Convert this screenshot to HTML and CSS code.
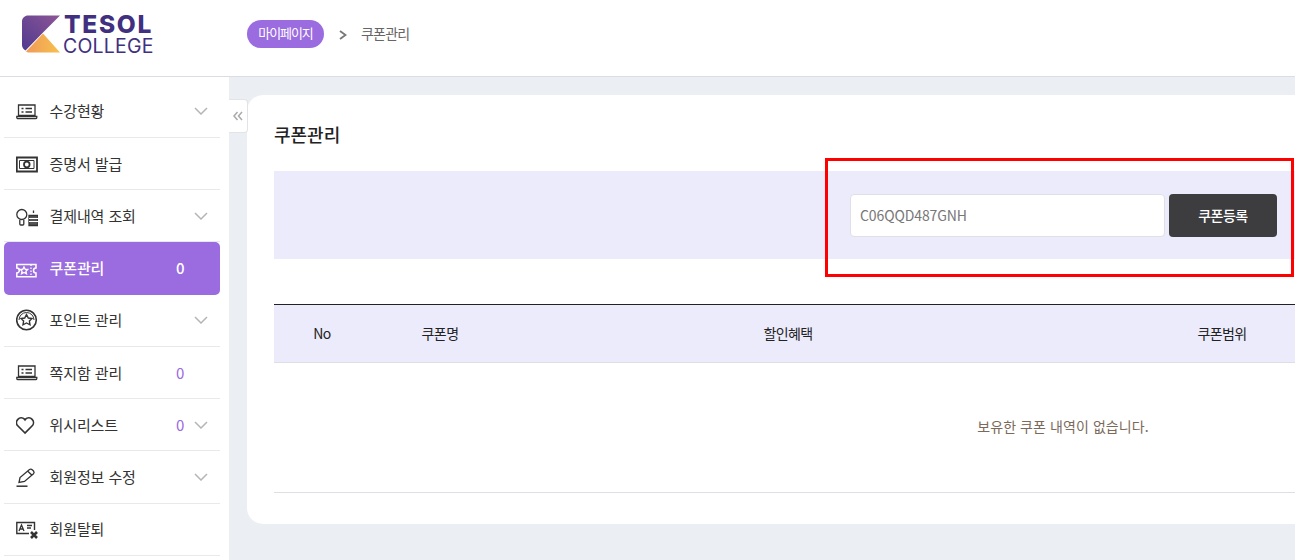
FILE: index.html
```html
<!DOCTYPE html>
<html lang="ko">
<head>
<meta charset="utf-8">
<title>쿠폰관리</title>
<link rel="stylesheet" href="styles.css">
</head>
<body>
<header class="topbar">
  <a class="logo">
    <svg class="logo-mark" viewBox="0 0 38 38" width="38" height="38">
      <defs>
        <linearGradient id="lp" x1="0" y1="1" x2="1" y2="0"><stop offset="0" stop-color="#4f3a8f"/><stop offset="1" stop-color="#8d5596"/></linearGradient>
        <linearGradient id="lo" x1="0" y1="0" x2="1" y2="0"><stop offset="0" stop-color="#f09a58"/><stop offset="1" stop-color="#f7c04e"/></linearGradient>
      </defs>
      <path d="M6 0.5H38L21 17.5L3.5 35.5C1.5 34.5 0 32.5 0 30V6.500C0 3 3 0.500 6 0.500Z" fill="url(#lp)"/>
      <path d="M21 18.500L38 37.500H7C5.800 37.500 4.800 37.200 4 36.500Z" fill="url(#lo)"/>
    </svg>
    <span class="logo-text"><span class="logo-top">TESOL</span><span class="logo-bottom">COLLEGE</span></span>
  </a>
  <nav class="crumbs">
    <span class="pill">마이페이지</span>
    <svg class="crumb-arrow" viewBox="0 0 8 10" width="8" height="10"><path d="M1 1L6.500 5L1 9" fill="none" stroke="#777" stroke-width="1.800"/></svg>
    <span class="crumb-now">쿠폰관리</span>
  </nav>
</header>
<div class="layout">
  <aside class="sidebar">
    <ul class="menu">
      <li class="item">
        <svg class="ico" viewBox="0 0 22 22"><path d="M2.500 5H19V15.500H2.500Z M0.800 16.500H20.800V17.500A1.200 1.200 0 0 1 19.600 18.700H2A1.200 1.200 0 0 1 0.800 17.500Z M5.500 8.500H7.500 M9.500 8.500H16 M5.500 12H7.500 M9.500 12H16"/></svg>
        <span class="label">수강현황</span><svg class="chev" viewBox="0 0 14 8"><path d="M1 1L7 7L13 1"/></svg>
      </li>
      <li class="item">
        <svg class="ico" viewBox="0 0 22 22"><path d="M0.800 4.500H21V18.500H0.800Z" stroke-width="1.800"/><path d="M3.500 7.500H18V15.500H3.500Z" stroke-width="1"/><circle cx="10.800" cy="11.500" r="2.800" stroke-width="1.800"/></svg>
        <span class="label">증명서 발급</span>
      </li>
      <li class="item">
        <svg class="ico" viewBox="0 0 22 22"><circle cx="5.800" cy="9.500" r="5"/><path d="M3.800 15V19A1 1 0 0 0 4.800 20H6.800A1 1 0 0 0 7.800 19V15"/><path class="solid" d="M13 10.500H22V20.500H13Z"/><path class="gap" d="M13 13.500H22 M13 16.500H22"/><path d="M17.500 5.500V8"/></svg>
        <span class="label">결제내역 조회</span><svg class="chev" viewBox="0 0 14 8"><path d="M1 1L7 7L13 1"/></svg>
      </li>
      <li class="item active">
        <svg class="ico" viewBox="0 0 22 22"><path d="M0.800 6.500H20V10A2.500 2.500 0 0 0 20 15V18.800H0.800V15A2.500 2.500 0 0 0 0.800 10Z" stroke-width="1.500"/><path d="M15 6.500V18.800" stroke-dasharray="1.500 1.500"/><path d="M8 9L9.200 11.400H11.700L9.900 13.200L10.500 15.800L8 14.500L5.500 15.800L6.100 13.200L4.300 11.400H6.800Z"/></svg>
        <span class="label">쿠폰관리</span><span class="count">0</span>
      </li>
      <li class="item">
        <svg class="ico" viewBox="0 0 22 22"><circle cx="10.500" cy="11" r="9.800" stroke-width="1.600"/><path d="M3 11A7.500 7.500 0 0 1 18 11" stroke-width="1"/><path d="M10.500 5.500L12.300 9L16 9.500L13.400 12.100L14 15.800L10.500 14L7 15.800L7.600 12.100L5 9.500L8.700 9Z" stroke-width="1.400"/></svg>
        <span class="label">포인트 관리</span><svg class="chev" viewBox="0 0 14 8"><path d="M1 1L7 7L13 1"/></svg>
      </li>
      <li class="item">
        <svg class="ico" viewBox="0 0 22 22"><path d="M2.500 4H19V14.500H2.500Z M0.800 15.500H20.800V16.500A1.200 1.200 0 0 1 19.600 17.700H2A1.200 1.200 0 0 1 0.800 16.500Z M5.500 7.500H7.500 M9.500 7.500H16 M5.500 11H7.500 M9.500 11H16"/></svg>
        <span class="label">쪽지함 관리</span><span class="count">0</span>
      </li>
      <li class="item">
        <svg class="ico" viewBox="0 0 22 22"><path d="M9 19L2 12A4.700 4.700 0 0 1 8.500 5.200L9 5.800L9.500 5.200A4.700 4.700 0 0 1 16 12Z" stroke-width="1.700"/></svg>
        <span class="label">위시리스트</span><span class="count">0</span><svg class="chev" viewBox="0 0 14 8"><path d="M1 1L7 7L13 1"/></svg>
      </li>
      <li class="item">
        <svg class="ico" viewBox="0 0 22 22"><path d="M3 16.500L4 11.500L13.500 3.500C14.500 2.800 15.500 3 16.500 4L17.500 5C18.300 6 18.300 7 17.500 7.800L8.500 15.500Z M11.800 5.200L16 9.200" stroke-width="1.300"/><path d="M0.500 20.200H11.500" stroke-width="1.500"/></svg>
        <span class="label">회원정보 수정</span><svg class="chev" viewBox="0 0 14 8"><path d="M1 1L7 7L13 1"/></svg>
      </li>
      <li class="item">
        <svg class="ico" viewBox="0 0 22 22"><path d="M13 15.500H0.800V4.500H18.500V12" stroke-width="1.400"/><path d="M3 13L5.500 7L8 13 M3.800 11H7.200 M11 7.500H16 M11 10H15"/><path d="M15 14L21 20 M21 14L15 20" stroke-width="2.600"/></svg>
        <span class="label">회원탈퇴</span>
      </li>
    </ul>
  </aside>
  <main class="content">
    <button class="collapse" type="button" aria-label="접기">
      <svg viewBox="0 0 10 10" width="10" height="10"><path d="M4.500 1L1 5L4.500 9 M9 1L5.500 5L9 9"/></svg>
    </button>
    <section class="card">
      <h1 class="title">쿠폰관리</h1>
      <form class="coupon-band">
        <input class="coupon-input" type="text" value="C06QQD487GNH">
        <button class="coupon-btn" type="button">쿠폰등록</button>
      </form>
      <table class="coupons">
        <colgroup><col class="c-no"><col class="c-name"><col class="c-benefit"><col class="c-scope"><col class="c-rest"></colgroup>
        <thead>
          <tr><th>No</th><th>쿠폰명</th><th>할인혜택</th><th>쿠폰범위</th><th></th></tr>
        </thead>
        <tbody>
          <tr><td colspan="5" class="empty">보유한 쿠폰 내역이 없습니다.</td></tr>
        </tbody>
      </table>
    </section>
  </main>
</div>
<div class="annotation"></div>
</body>
</html>
```
FILE: styles.css
```css
* { box-sizing: border-box; }
html, body { height: 100%; }
body {
  margin: 0;
  width: 1295px;
  height: 560px;
  overflow: hidden;
  position: relative;
  background: #ebeef3;
  color: #222;
  font-family: "Noto Sans CJK KR", "Noto Sans", sans-serif;
}
.topbar {
  height: 77px;
  background: #fff;
  border-bottom: 1px solid #dcdde0;
  display: flex;
  align-items: flex-start;
}
.logo {
  width: 247px;
  padding: 15px 0 0 22px;
  display: flex;
  gap: 3px;
}
.logo-mark { display: block; flex: none; }
.logo-text { display: flex; flex-direction: column; color: #41307f; font-family: Inter, sans-serif; }
.logo-top { font-size: 24.500px; font-weight: 800; line-height: 19px; letter-spacing: 1.700px; padding-left: 1px; height: 19px; }
.logo-bottom { font-size: 19.500px; font-weight: 400; line-height: 18px; letter-spacing: 0.2px; margin-top: 3px; }
.crumbs { display: flex; align-items: center; height: 28px; margin-top: 20px; }
.pill {
  height: 28px;
  width: 77px;
  border-radius: 14px;
  background: #9b6be0;
  color: #fff;
  font-size: 13px;
  letter-spacing: -1.100px;
  line-height: 26px;
  text-align: center;
}
.crumb-arrow { margin: 2px 0 0 15px; }
.crumb-now { margin: 0 0 2px 14px; font-size: 14px; letter-spacing: -0.8px; color: #666; }
.layout { display: flex; height: 483px; }
.sidebar { width: 229px; flex: none; background: #fff; padding: 8.700px 9px 0 4px; }
.menu { list-style: none; margin: 0; padding: 0; }
.item {
  height: 52.250px;
  display: flex;
  align-items: center;
  padding: 0 12px;
  border-bottom: 1px solid #e8e9eb;
  color: #333;
}
.ico {
  width: 22px;
  height: 22px;
  flex: none;
  fill: none;
  stroke: #333;
  stroke-width: 1.300;
}
.ico .solid { fill: #555; stroke: #333; }
.ico .gap { stroke: #fff; stroke-width: 1; }
.label { margin-left: 11.500px; padding-bottom: 1px; font-size: 15px; flex: 1; letter-spacing: -0.1px; }
.count { width: 18px; font-size: 15px; color: #9b6be0; flex: none; padding-bottom: 1px; }
.count:last-child { margin-right: 14px; }
.chev { width: 14px; height: 8px; fill: none; stroke: #b5b5b5; stroke-width: 1.500; flex: none; }
.active { background: #9b6be0; border-bottom: 0; border-radius: 5px; color: #fff; }
.active .ico { stroke: #fff; }
.active .label { font-weight: 500; padding-bottom: 3px; }
.active .count { color: #fff; font-weight: 500; padding-bottom: 3px; }
.content { position: relative; flex: 1; min-width: 0; padding: 18px 0 0 18px; }
.collapse {
  position: absolute;
  left: 0;
  top: 22px;
  width: 19px;
  height: 34px;
  padding: 0;
  background: #fff;
  border: 1px solid #e2e3e6;
  border-left: 0;
  border-radius: 0 4px 4px 0;
  display: flex;
  align-items: center;
  justify-content: center;
}
.collapse path { fill: none; stroke: #aaa; stroke-width: 1.500; }
.card {
  width: 1632px;
  height: 429px;
  background: #fff;
  border-radius: 16px;
  padding: 27px;
}
.title { margin: 0; font-size: 18px; font-weight: 500; line-height: 24px; color: #222; }
.coupon-band {
  margin-top: 25px;
  width: 1021px;
  height: 88px;
  background: #ecebfb;
  display: flex;
  justify-content: flex-end;
  align-items: center;
  gap: 4px;
  padding-right: 18px;
}
.coupon-input {
  width: 315px;
  height: 43px;
  background: #fff;
  border: 1px solid #dfdfe6;
  border-radius: 4px;
  padding: 0 9px;
  font: 400 14px "Noto Sans CJK KR", sans-serif;
  letter-spacing: -0.1px;
  color: #777;
}
.coupon-btn {
  width: 108px;
  height: 43px;
  background: #3d3d3f;
  border: 0;
  border-radius: 4px;
  color: #fff;
  font: 500 14px "Noto Sans CJK KR", sans-serif;
  letter-spacing: -0.5px;
}
.coupons {
  margin-top: 45px;
  width: 1578px;
  border-collapse: collapse;
  table-layout: fixed;
}
.c-no { width: 96px; }
.c-name { width: 140px; }
.c-benefit { width: 556px; }
.c-scope { width: 312px; }
.coupons th {
  height: 58px;
  background: #ecebfb;
  border-top: 1px solid #222;
  border-bottom: 1px solid #dfdfe3;
  font-size: 14px;
  font-weight: 400;
  letter-spacing: -0.6px;
  color: #222;
  padding: 0 0 2px;
}
.empty {
  height: 130px;
  text-align: center;
  font-size: 14px;
  letter-spacing: 0.08px;
  color: #7b6a5a;
  border-bottom: 1px solid #dfdfe3;
  padding: 0 0 4px;
}
.annotation {
  position: absolute;
  left: 825px;
  top: 158px;
  width: 469px;
  height: 119px;
  border: 3px solid #f00;
  pointer-events: none;
}
```
